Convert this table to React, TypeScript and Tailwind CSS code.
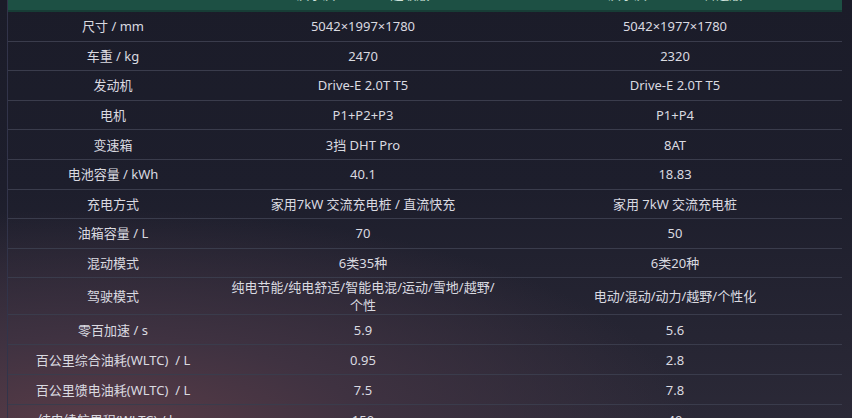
import React from "react";

type Row = { label: string; a: React.ReactNode; b: React.ReactNode; h: string };

const rows: Row[] = [
  { label: "尺寸 / mm", a: "5042×1997×1780", b: "5042×1977×1780", h: "h-[29.6px]" },
  { label: "车重 / kg", a: "2470", b: "2320", h: "h-[29.6px]" },
  { label: "发动机", a: "Drive-E 2.0T T5", b: "Drive-E 2.0T T5", h: "h-[29.6px]" },
  { label: "电机", a: "P1+P2+P3", b: "P1+P4", h: "h-[29.6px]" },
  { label: "变速箱", a: "3挡 DHT Pro", b: "8AT", h: "h-[29.6px]" },
  { label: "电池容量 / kWh", a: "40.1", b: "18.83", h: "h-[29.6px]" },
  { label: "充电方式", a: "家用7kW 交流充电桩 / 直流快充", b: "家用 7kW 交流充电桩", h: "h-[29.6px]" },
  { label: "油箱容量 / L", a: "70", b: "50", h: "h-[29.6px]" },
  { label: "混动模式", a: "6类35种", b: "6类20种", h: "h-[29.6px]" },
  {
    label: "驾驶模式",
    a: (
      <>
        纯电节能/纯电舒适/智能电混/运动/雪地/越野/
        <br />
        个性
      </>
    ),
    b: "电动/混动/动力/越野/个性化",
    h: "h-[37px]",
  },
  { label: "零百加速 / s", a: "5.9", b: "5.6", h: "h-[30px]" },
  { label: "百公里综合油耗(WLTC)  / L", a: "0.95", b: "2.8", h: "h-[30px]" },
  { label: "百公里馈电油耗(WLTC)  / L", a: "7.5", b: "7.8", h: "h-[30px]" },
  { label: "纯电续航里程(WLTC) / km", a: "150", b: "40", h: "h-[30px]" },
];

export default function App() {
  return (
    <div
      className="w-[852px] h-[418px] overflow-hidden bg-[radial-gradient(ellipse_70%_55%_at_12%_105%,#5c3d48_0%,#3f3241_45%,transparent_100%),linear-gradient(180deg,#1b1c29_0%,#1d1e2c_45%,#2b2937_100%)] text-[#dadae0] text-[13px] leading-[18px]"
      style={{ fontFamily: '"Noto Sans", "Noto Sans CJK SC", sans-serif' }}
    >
      <div className="ml-[7px] w-[835px] mt-[-18px] border-l border-[#32344a]">
        <div className="grid grid-cols-[210px_290px_1fr] h-[30px] bg-[#1d5044] border-b-2 border-[#173d36] text-[#cfe3dc] items-center">
          <div></div>
          <div className="text-center -translate-y-[2px]">沃尔沃 XC90 T8 超级版</div>
          <div className="text-center -translate-y-[2px]">沃尔沃 XC90 B5 智远版</div>
        </div>
        {rows.map((r, i) => (
          <div
            key={i}
            className={`grid grid-cols-[210px_290px_1fr] items-center border-b border-[#3a3c4c] ${r.h}`}
          >
            <div className="text-center whitespace-pre">{r.label}</div>
            <div className="text-center">{r.a}</div>
            <div className="text-center">{r.b}</div>
          </div>
        ))}
      </div>
    </div>
  );
}
